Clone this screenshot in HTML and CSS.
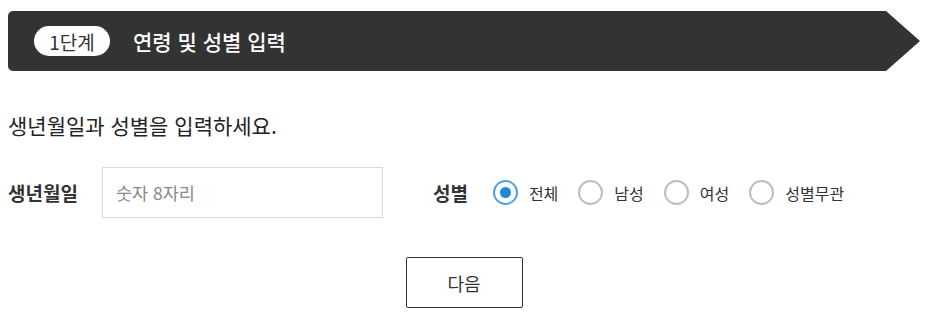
FILE: index.html
```html
<!DOCTYPE html>
<html lang="ko">
<head>
<meta charset="utf-8">
<link rel="stylesheet" href="styles.css">
</head>
<body>
<div class="page">
  <div class="step-bar">
    <span class="badge">1단계</span>
    <span class="step-title">연령 및 성별 입력</span>
  </div>
  <p class="guide">생년월일과 성별을 입력하세요.</p>
  <div class="form-row">
    <div class="field">
      <span class="label">생년월일</span>
      <div class="input">숫자 8자리</div>
    </div>
    <div class="field gender">
      <span class="label">성별</span>
      <div class="radios">
        <span class="radio checked"></span><span class="rlabel">전체</span>
        <span class="radio"></span><span class="rlabel">남성</span>
        <span class="radio"></span><span class="rlabel">여성</span>
        <span class="radio"></span><span class="rlabel">성별무관</span>
      </div>
    </div>
  </div>
  <div class="actions">
    <button class="next">다음</button>
  </div>
</div>
</body>
</html>
```

FILE: styles.css
```css
* { box-sizing: border-box; }
body {
  margin: 0;
  background: #fff;
  font-family: "Noto Sans CJK KR", "Noto Sans", sans-serif;
  color: #222;
}
.page {
  padding: 11px 10px 0 8px;
}
.step-bar {
  width: 912px;
  height: 60px;
  background: #333333;
  border-radius: 5px 0 0 5px;
  clip-path: polygon(0 0, calc(100% - 34px) 0, 100% 50%, calc(100% - 34px) 100%, 0 100%);
  display: flex;
  align-items: center;
  padding-left: 26px;
}
.badge {
  background: #fff;
  color: #333;
  border-radius: 15px;
  height: 30px;
  width: 76px;
  display: flex;
  align-items: center;
  justify-content: center;
  font-size: 19px;
}
.step-title {
  color: #fff;
  font-size: 21px;
  font-weight: 500;
  margin-left: 23px;
}
.guide {
  margin: 40px 0 0 0;
  font-size: 21px;
  line-height: 28px;
  color: #222;
}
.form-row {
  display: flex;
  align-items: center;
  margin-top: 28px;
}
.field {
  display: flex;
  align-items: center;
}
.label {
  font-size: 19px;
  font-weight: 700;
  color: #333;
}
.input {
  margin-left: 24px;
  width: 281px;
  height: 51px;
  border: 1px solid #d9d9d9;
  display: flex;
  align-items: center;
  padding-left: 13px;
  font-size: 17.5px;
  color: #888;
}
.gender {
  margin-left: 50px;
}
.radios {
  display: flex;
  align-items: center;
  margin-left: 25px;
}
.radio {
  width: 25px;
  height: 25px;
  border-radius: 50%;
  border: 2px solid #bdbdbd;
  background: #fff;
  position: relative;
}
.radio.checked {
  border-color: #4da3dc;
}
.radio.checked::after {
  content: "";
  position: absolute;
  left: 50%;
  top: 50%;
  width: 11px;
  height: 11px;
  margin: -5.5px 0 0 -5.5px;
  border-radius: 50%;
  background: #1e8ad3;
}
.rlabel {
  font-size: 16px;
  color: #333;
  margin-left: 11px;
  margin-right: 20px;
}
.actions {
  display: flex;
  justify-content: center;
  margin-top: 39px;
}
.next {
  width: 117px;
  height: 51px;
  border: 1px solid #333;
  border-radius: 2px;
  background: #fff;
  font-family: inherit;
  font-size: 18px;
  color: #333;
}
```
